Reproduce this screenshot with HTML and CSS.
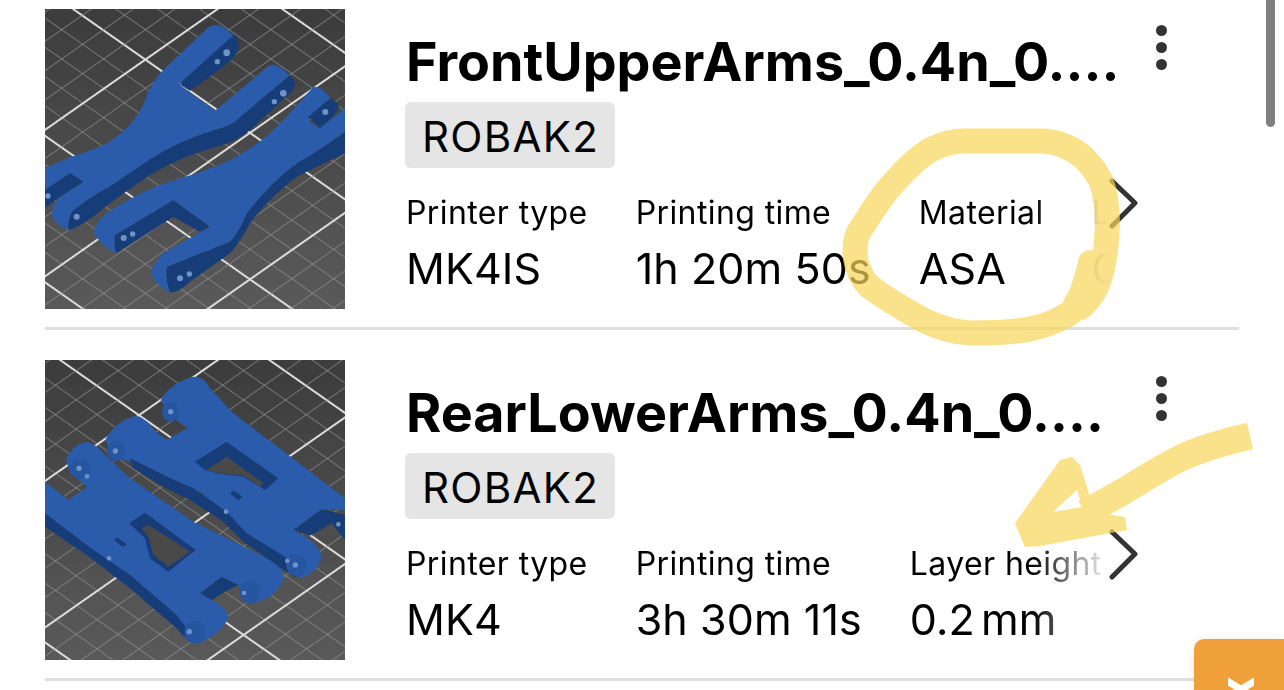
FILE: index.html
```html
<!DOCTYPE html>
<html lang="en">
<head>
    <meta charset="UTF-8">
    <meta name="viewport" content="width=device-width, initial-scale=1.0">
    <title>Print files</title>
    <link rel="stylesheet" href="styles.css">
</head>
<body>
    <svg class="defs" width="0" height="0">
        <defs>
            <pattern id="grid-a" patternUnits="userSpaceOnUse" width="20" height="360" patternTransform="rotate(35) translate(0 -55)">
                <rect x="0" y="0" width="20" height="6" fill="#dcdcdc"/>
                <rect x="0" y="72" width="20" height="2" fill="#909090"/>
                <rect x="0" y="144" width="20" height="2" fill="#909090"/>
                <rect x="0" y="216" width="20" height="2" fill="#909090"/>
                <rect x="0" y="288" width="20" height="2" fill="#909090"/>
            </pattern>
            <pattern id="grid-b" patternUnits="userSpaceOnUse" width="20" height="360" patternTransform="rotate(-35) translate(0 -18)">
                <rect x="0" y="0" width="20" height="6" fill="#dcdcdc"/>
                <rect x="0" y="72" width="20" height="2" fill="#909090"/>
                <rect x="0" y="144" width="20" height="2" fill="#909090"/>
                <rect x="0" y="216" width="20" height="2" fill="#909090"/>
                <rect x="0" y="288" width="20" height="2" fill="#909090"/>
            </pattern>
            <pattern id="grid-c" href="#grid-a" patternTransform="rotate(35) translate(0 -18)"/>
            <pattern id="grid-d" href="#grid-b" patternTransform="rotate(-35) translate(0 -3)"/>
            <linearGradient id="plate" x1="0" y1="0" x2="0" y2="1">
                <stop offset="0" stop-color="#3c3c3c"/>
                <stop offset="1" stop-color="#5a5a5a"/>
            </linearGradient>
            <filter id="soft"><feGaussianBlur stdDeviation="1.6"/></filter>
        </defs>
    </svg>

    <ul class="print-list">
        <li class="print-item">
            <svg class="thumb" viewBox="45 27 900 900">
                <g filter="url(#soft)">
                    <rect x="45" y="27" width="900" height="900" fill="url(#plate)"/>
                    <rect x="45" y="27" width="900" height="900" fill="url(#grid-a)"/>
                    <rect x="45" y="27" width="900" height="900" fill="url(#grid-b)"/>
                    <!-- left arm -->
                    <path fill="#193c78" d="M115 690 Q150 685 240 610 Q300 565 360 525 Q450 470 560 440 Q620 425 660 390 L790 270 Q805 245 778 226 L620 360 Q600 378 560 388 Q450 420 360 478 Q290 525 235 562 Q190 585 128 632 Q112 655 115 690 Z"/>
                    <path fill="#193c78" d="M610 105 Q632 120 625 150 Q610 180 580 200 L480 272 L452 255 L455 245 Z"/>
                    <path fill="#2a5cab" d="M45 505 L120 472 Q190 450 240 425 Q320 370 345 300 Q365 240 410 200 L535 82 Q560 65 585 85 L610 105 L455 245 Q445 255 460 264 L555 332 L715 198 Q735 188 755 205 L778 226 L620 360 Q600 378 560 388 Q450 420 360 478 Q290 525 235 562 Q190 585 128 632 Q112 655 115 690 Q85 680 68 655 Q60 625 90 590 L160 545 L120 520 L45 570 Z"/>
                    <path fill="#193c78" d="M45 570 L120 520 L160 545 L90 590 L45 625 Z"/>
                    <!-- right arm -->
                    <path fill="#193c78" d="M945 395 Q870 450 800 490 Q720 550 650 640 Q625 700 600 725 L410 800 Q405 840 420 878 Q450 875 480 845 L600 760 Q635 720 660 670 Q720 590 800 530 Q870 495 945 460 Z"/>
                    <path fill="#193c78" d="M835 350 L900 295 Q930 310 925 325 Q910 355 870 385 Z"/>
                    <path fill="#193c78" d="M255 705 L430 600 L540 680 L510 695 L430 650 L258 760 Q250 735 255 705 Z"/>
                    <path fill="#2a5cab" d="M945 325 L945 395 Q870 450 800 490 Q720 550 650 640 Q625 700 600 725 L410 800 Q405 840 420 878 Q385 860 362 825 Q365 795 400 760 L540 680 L430 600 L255 705 Q250 735 258 760 Q220 745 192 700 Q195 665 230 640 Q330 570 450 535 Q620 490 720 400 Q800 320 850 260 Q880 260 900 295 L835 350 Q830 365 870 385 Z"/>
                    <g fill="#6f93c7">
                        <circle cx="590" cy="158" r="10"/><circle cx="562" cy="185" r="8"/>
                        <circle cx="760" cy="280" r="10"/><circle cx="733" cy="305" r="8"/>
                        <circle cx="886" cy="336" r="9"/><circle cx="140" cy="650" r="9"/>
                        <circle cx="281" cy="714" r="9"/><circle cx="308" cy="702" r="8"/>
                        <circle cx="450" cy="835" r="9"/><circle cx="478" cy="822" r="8"/>
                        <circle cx="54" cy="588" r="8"/>
                    </g>
                </g>
            </svg>
            <div class="print-info">
                <div class="title-row">
                    <h2 class="print-title">FrontUpperArms_0.4n_0....</h2>
                    <span class="kebab"><i></i><i></i><i></i></span>
                </div>
                <span class="tag">ROBAK2</span>
                <div class="params">
                    <div class="param"><span class="param-label">Printer type</span><span class="param-value">MK4IS</span></div>
                    <div class="param"><span class="param-label">Printing time</span><span class="param-value">1h 20m 50s</span></div>
                    <div class="param"><span class="param-label">Material</span><span class="param-value">ASA</span></div>
                    <div class="param"><span class="param-label">Layer height</span><span class="param-value unit">0.2 mm</span></div>
                </div>
            </div>
            <svg class="chevron" width="32" height="52" viewBox="0 0 32 52"><path d="M3 3 L26 25 L3 48" fill="none" stroke="#333" stroke-width="5" stroke-linecap="round" stroke-linejoin="round"/></svg>
        </li>
        <li class="print-item">
            <svg class="thumb" viewBox="45 45 900 900">
                <g filter="url(#soft)">
                    <rect x="45" y="45" width="900" height="900" fill="url(#plate)"/>
                    <rect x="45" y="45" width="900" height="900" fill="url(#grid-c)"/>
                    <rect x="45" y="45" width="900" height="900" fill="url(#grid-d)"/>
                    <!-- back arm -->
                    <path fill="#2a5cab" d="M392 165 Q420 115 490 95 Q525 95 540 130 L610 205 L945 460 V495 L875 493 L790 555 L840 585 Q875 615 875 640 Q860 680 818 698 Q770 690 745 650 L640 570 L590 505 L510 440 L430 405 L340 360 L260 340 Q228 310 228 280 Q260 225 320 212 Q355 225 372 255 L410 285 L472 248 Q420 220 392 165 Z"/>
                    <path fill="#193c78" d="M300 340 L410 395 L490 430 L590 500 L650 565 L765 635 L800 700 L745 665 L640 590 L580 530 L480 465 L400 425 L310 370 Z"/>
                    <path fill="#193c78" d="M790 555 L875 493 L945 510 V585 L905 535 L840 572 Z"/>
                    <path fill="#193c78" d="M495 350 L590 290 L745 400 L705 435 L640 395 L560 385 L525 375 Z"/>
                    <path fill="#4a4a4a" d="M530 375 L590 335 L700 415 L690 425 L640 392 L560 383 Z"/>
                    <path fill="#193c78" d="M600 445 L612 437 L638 455 L625 466 Z"/>
                    <!-- front arm -->
                    <path fill="#2a5cab" d="M45 410 L115 465 L172 425 Q115 385 108 345 Q130 295 172 290 Q200 300 215 320 L300 400 L490 530 L700 635 Q755 660 762 700 Q745 750 675 775 Q640 770 625 720 L575 695 L510 745 L570 780 Q595 800 595 820 Q570 870 505 895 Q470 890 440 850 L370 790 L300 730 L170 630 L45 545 Z"/>
                    <path fill="#193c78" d="M45 505 L170 600 L300 690 L370 750 L440 810 L470 850 L490 893 Q470 890 440 850 L370 790 L300 730 L170 630 L45 545 Z"/>
                    <path fill="#193c78" d="M510 745 L575 695 L625 720 L585 740 L545 765 Z"/>
                    <path fill="#193c78" d="M298 535 L345 503 L497 615 L415 680 L360 640 L345 580 Z"/>
                    <path fill="#4a4a4a" d="M335 550 L355 540 L480 620 L415 665 L370 630 L355 575 Z"/>
                    <path fill="#193c78" d="M252 585 L262 578 L290 598 L278 606 Z"/>
                    <!-- end faces of the lobes -->
                    <g fill="#2754a2">
                        <ellipse cx="660" cy="742" rx="30" ry="34"/>
                        <ellipse cx="495" cy="862" rx="32" ry="34"/>
                        <ellipse cx="798" cy="660" rx="30" ry="34"/>
                        <ellipse cx="258" cy="318" rx="28" ry="30"/>
                        <ellipse cx="150" cy="372" rx="32" ry="30"/>
                        <ellipse cx="422" cy="200" rx="26" ry="30"/>
                    </g>
                    <g fill="#6f93c7">
                        <circle cx="422" cy="200" r="8"/><circle cx="256" cy="318" r="8"/>
                        <circle cx="147" cy="370" r="8"/><circle cx="171" cy="394" r="7"/>
                        <circle cx="588" cy="500" r="7"/><circle cx="237" cy="640" r="7"/>
                        <circle cx="772" cy="648" r="7"/><circle cx="796" cy="660" r="8"/>
                        <circle cx="642" cy="744" r="7"/><circle cx="478" cy="860" r="8"/>
                        <circle cx="925" cy="538" r="7"/>
                    </g>
                </g>
            </svg>
            <div class="print-info">
                <div class="title-row">
                    <h2 class="print-title">RearLowerArms_0.4n_0....</h2>
                    <span class="kebab"><i></i><i></i><i></i></span>
                </div>
                <span class="tag">ROBAK2</span>
                <div class="params">
                    <div class="param"><span class="param-label">Printer type</span><span class="param-value">MK4</span></div>
                    <div class="param"><span class="param-label">Printing time</span><span class="param-value">3h 30m 11s</span></div>
                    <div class="param"><span class="param-label">Layer height</span><span class="param-value unit">0.2 mm</span></div>
                </div>
            </div>
            <svg class="chevron" width="32" height="52" viewBox="0 0 32 52"><path d="M3 3 L26 25 L3 48" fill="none" stroke="#333" stroke-width="5" stroke-linecap="round" stroke-linejoin="round"/></svg>
        </li>
    </ul>

    <div class="scrollbar"></div>

    <!-- highlighter marks drawn on top of the screenshot -->
    <svg class="marker" viewBox="0 0 1284 690">
        <g class="ink">
            <path class="stroke wide" d="M1077 308 C1062 320 1045 326 1030 329 C1010 333 990 333 970 333 C950 332 935 326 923 320 C905 310 885 298 870 287 C858 275 855 262 855 250 C855 240 858 232 862 227 C872 212 880 198 890 187 C903 172 917 158 930 150 C942 144 952 141 963 141 L1043 141 C1060 142 1072 148 1083 157 C1092 166 1100 176 1103 187 C1107 202 1108 218 1107 233 C1106 250 1104 265 1100 277 C1096 292 1086 304 1077 310"/>
            <path class="stroke start" d="M1090 262 C1086 280 1082 295 1075 304"/>
        </g>
        <g class="ink">
            <path class="stroke shaft" d="M1250 436 C1228 441 1205 447 1183 457 C1160 468 1138 483 1117 495 L1085 513"/>
            <path class="patch" d="M1015 523 L1060 460 L1072 457 L1080 465 L1088 490 L1094 512 L1125 517 L1127 530 L1040 546 L1025 547 Z M1053 512 L1082 507 L1077 490 Z" fill-rule="evenodd"/>
        </g>
    </svg>

    <div class="feedback-tab">
        <svg width="26" height="13" viewBox="0 0 26 13"><path d="M-2 3.4 L28 21.4 M28 3.4 L-2 21.4" fill="none" stroke="#fff" stroke-width="7"/></svg>
    </div>
</body>
</html>
```

FILE: styles.css
```css
* {
    box-sizing: border-box;
}

html, body {
    margin: 0;
    height: 100%;
    overflow: hidden;
    background: #fff;
}

body {
    position: relative;
    font-family: Inter, 'Liberation Sans', sans-serif;
    color: #000;
}

.defs {
    position: absolute;
}

.print-list {
    list-style: none;
    margin: -21px 0 0 45px;
    padding: 0;
    width: 1194px;
}

.print-item {
    position: relative;
    display: flex;
    gap: 61px;
    padding: 30px 0 18px;
    border-bottom: 3px solid #e0e0e0;
}

.thumb {
    display: block;
    flex: 0 0 300px;
    width: 300px;
    height: 300px;
}

.print-info {
    flex: 1;
    min-width: 0;
    padding-top: 15px;
}

.title-row {
    display: flex;
    justify-content: space-between;
    width: 761px;
    height: 78px;
}

.print-title {
    margin: 0;
    font-size: 53.8px;
    line-height: 76px;
    font-weight: 700;
    white-space: nowrap;
}

.kebab {
    display: flex;
    flex-direction: column;
    gap: 6px;
    margin-top: 1px;
}

.kebab i {
    display: block;
    width: 11px;
    height: 11px;
    border-radius: 50%;
    background: #333;
}

.tag {
    display: inline-block;
    height: 66px;
    margin-left: -1px;
    padding: 0 16px 0 17px;
    font-size: 42px;
    letter-spacing: 1.3px;
    line-height: 69px;
    background: #e5e5e5;
    border-radius: 6px;
}

.params {
    display: flex;
    gap: 48px;
    width: 704px;
    margin-top: 20px;
    overflow: hidden;
    -webkit-mask-image: linear-gradient(90deg, #000 626px, transparent 704px);
    mask-image: linear-gradient(90deg, #000 626px, transparent 704px);
}

.param {
    display: flex;
    flex-direction: column;
    flex: none;
    white-space: nowrap;
}

.param-label {
    font-size: 32px;
    letter-spacing: .4px;
    line-height: 50px;
}

.param-value {
    font-size: 43px;
    letter-spacing: .1px;
    line-height: 60px;
}

.param-value.unit {
    word-spacing: -6px;
}

.chevron {
    position: absolute;
    left: 1064px;
    top: 199px;
}

.scrollbar {
    position: absolute;
    top: 0;
    left: 1266px;
    width: 9px;
    height: 127px;
    background: #808080;
    border-radius: 0 0 5px 5px;
}

.marker {
    position: absolute;
    inset: 0;
    width: 1284px;
    height: 690px;
    pointer-events: none;
}

.ink {
    opacity: .7;
}

.stroke {
    fill: none;
    stroke: #f8d65a;
    stroke-width: 24;
}

.stroke.wide {
    stroke-width: 25;
}

.stroke.shaft {
    stroke-width: 27;
}

.stroke.start {
    stroke-linecap: round;
}

.patch {
    fill: #f8d65a;
}

.feedback-tab {
    position: absolute;
    left: 1194px;
    top: 639px;
    width: 90px;
    height: 51px;
    padding: 38px 0 0 34px;
    background: #f0a03a;
    border-top-left-radius: 10px;
    box-shadow: 0 0 8px rgba(0, 0, 0, .08);
}

.feedback-tab svg {
    display: block;
}
```
